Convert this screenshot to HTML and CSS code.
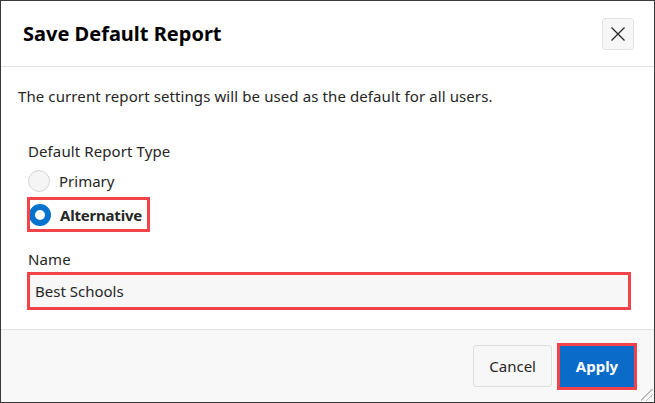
FILE: index.html
```html
<!DOCTYPE html>
<html lang="en">
<head>
<meta charset="utf-8">
<title>Save Default Report</title>
<link rel="stylesheet" href="styles.css">
</head>
<body>
<div class="dialog">
  <header class="dlg-header">
    <h1 class="dlg-title">Save Default Report</h1>
    <button class="close-btn" aria-label="Close">
      <svg width="16" height="16" viewBox="0 0 16 16"><path d="M1.5 1.5L14.5 14.5M14.5 1.5L1.5 14.5" stroke="#262626" stroke-width="1.3" fill="none"/></svg>
    </button>
  </header>
  <main class="dlg-body">
    <p class="intro">The current report settings will be used as the default for all users.</p>
    <div class="field">
      <div class="label">Default Report Type</div>
      <div class="radio-row primary">
        <span class="radio"></span><span class="radio-label">Primary</span>
      </div>
      <div class="radio-row selected highlight">
        <span class="radio checked"></span><span class="radio-label">Alternative</span>
      </div>
    </div>
    <div class="field name-field">
      <div class="label">Name</div>
      <div class="input highlight">Best Schools</div>
    </div>
  </main>
  <footer class="dlg-footer">
    <button class="btn">Cancel</button>
    <button class="btn btn-hot highlight">Apply</button>
    <span class="resize"></span>
  </footer>
</div>
</body>
</html>
```
FILE: styles.css
```css
* { box-sizing: border-box; }
html, body { margin: 0; padding: 0; background: #fff; }
body { font-family: "Noto Sans", "Open Sans", sans-serif; color: #262626; }
.dialog {
  width: 655px; height: 403px;
  border: 1px solid #3a3a3a;
  display: flex; flex-direction: column;
  position: relative;
  background: #fff;
}
.dlg-header {
  height: 66px;
  border-bottom: 1px solid #e3e3e3;
  display: flex; align-items: center; justify-content: space-between;
  padding: 0 20px 0 22px;
}
.dlg-title {
  margin: 0; font-size: 20px; font-weight: 700; color: #000;
}
.close-btn {
  width: 32px; height: 32px; padding: 0;
  background: #f7f7f7; border: 1px solid #e3e3e3; border-radius: 3px;
  display: flex; align-items: center; justify-content: center;
}
.dlg-body { flex: 1; padding: 19px 0 0 0; }
.intro { margin: 0 0 0 17px; font-size: 15px; line-height: 20px; letter-spacing: 0.1px; }
.field { margin-left: 27px; }
.label { font-size: 15px; line-height: 20px; margin-top: 35px; letter-spacing: 0.1px; }
.radio-row { display: flex; align-items: center; height: 32px; font-size: 15px; }
.radio-row.primary { margin-top: 4px; }
.radio {
  width: 22px; height: 22px; border-radius: 50%;
  background: #f5f5f5; border: 1px solid #d6d6d6; margin-right: 9px;
}
.radio.checked { background: #fff; border: 6px solid #0572ce; }
.radio-row.selected { font-weight: 700; width: 123px; margin-left: -1px; padding-left: 2px; height: 35px; letter-spacing: -0.2px; }
.highlight { outline: 3px solid #f2434a; outline-offset: -3px; }
.name-field .label { margin-top: 17px; }
.input {
  margin-top: 3px; width: 604px; height: 38px; margin-left: -1px;
  background: #f7f7f7; border-left: 1px solid #0572ce; border-right: 1px solid #0572ce;
  padding: 0 7px; font-size: 15px; line-height: 38px;
}
.dlg-footer {
  height: 73px; background: #f8f8f8; border-top: 1px solid #e3e3e3;
  display: flex; align-items: center; justify-content: flex-end;
  padding: 0 17px 0 0; gap: 5px;
}
.btn {
  font-family: inherit; font-size: 15px;
  height: 42px; padding: 0 15px;
  background: #f7f7f7; color: #262626; border: 1px solid #dedede; border-radius: 3px;
}
.btn-hot {
  height: 47px; width: 80px; padding: 0;
  background: #0a6bc9; color: #fff; font-weight: 700; border: none; border-radius: 0;
}
.resize {
  position: absolute; right: 1px; bottom: 1px; width: 12px; height: 12px;
  background: linear-gradient(135deg, transparent 45%, #bbb 45%, #bbb 52%, transparent 52%, transparent 68%, #bbb 68%, #bbb 75%, transparent 75%);
}
```
